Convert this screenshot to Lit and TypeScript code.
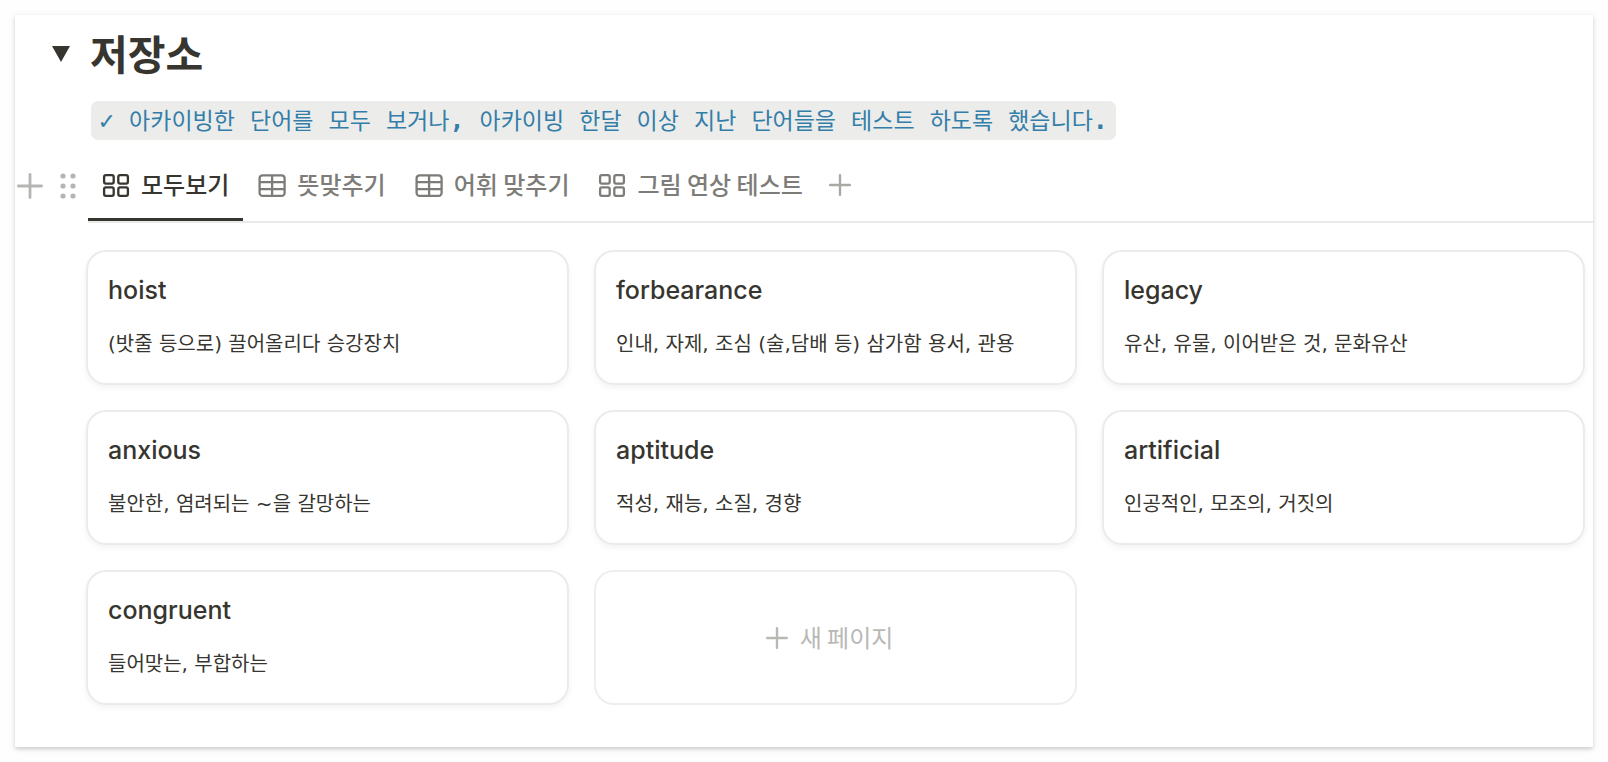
import { LitElement, html, css, svg } from "lit";
import { customElement, property, state } from "lit/decorators.js";
import { classMap } from "lit/directives/class-map.js";

type ViewKind = "gallery" | "table";

interface View {
  name: string;
  kind: ViewKind;
}

interface Word {
  term: string;
  meaning: string;
}

const VIEWS: View[] = [
  { name: "모두보기", kind: "gallery" },
  { name: "뜻맞추기", kind: "table" },
  { name: "어휘 맞추기", kind: "table" },
  { name: "그림 연상 테스트", kind: "gallery" },
];

const WORDS: Word[] = [
  { term: "hoist", meaning: "(밧줄 등으로) 끌어올리다 승강장치" },
  { term: "forbearance", meaning: "인내, 자제, 조심 (술,담배 등) 삼가함 용서, 관용" },
  { term: "legacy", meaning: "유산, 유물, 이어받은 것, 문화유산" },
  { term: "anxious", meaning: "불안한, 염려되는 ~을 갈망하는" },
  { term: "aptitude", meaning: "적성, 재능, 소질, 경향" },
  { term: "artificial", meaning: "인공적인, 모조의, 거짓의" },
  { term: "congruent", meaning: "들어맞는, 부합하는" },
];

const NOTE = "✓ 아카이빙한 단어를 모두 보거나, 아카이빙 한달 이상 지난 단어들을 테스트 하도록 했습니다.";

const galleryIcon = svg`
  <rect x="2.1" y="4.1" width="9.6" height="8.5" rx="1.8"></rect>
  <rect x="16.3" y="4.1" width="9.6" height="8.5" rx="1.8"></rect>
  <rect x="2.1" y="16.4" width="9.6" height="8.5" rx="1.8"></rect>
  <rect x="16.3" y="16.4" width="9.6" height="8.5" rx="1.8"></rect>`;

const tableIcon = svg`
  <rect x="1.6" y="4.3" width="25" height="20.6" rx="3"></rect>
  <path d="M1.6 11.2H26.6M1.6 18.1H26.6M14.1 4.3V24.9"></path>`;

@customElement("view-icon")
class ViewIcon extends LitElement {
  @property() kind: ViewKind = "gallery";

  static styles = css`
    :host { display: block; width: 28px; height: 28px; }
    .icon { display: block; fill: none; stroke: currentColor; stroke-width: 2.3; }
  `;

  render() {
    return html`<svg class="icon" width="28" height="28" viewBox="0 0 28 28" aria-hidden="true">
      ${this.kind === "table" ? tableIcon : galleryIcon}
    </svg>`;
  }
}

@customElement("word-card")
class WordCard extends LitElement {
  @property() term = "";
  @property() meaning = "";

  static styles = css`
    :host { display: block; }
    .card {
      display: flex;
      flex-direction: column;
      gap: 24px;
      padding: 24px 22px 27px;
      border-radius: 20px;
      background: #fff;
      color: #37352f;
      text-decoration: none;
      box-shadow: inset 0 0 0 2px #ebebea, 0 3px 6px rgba(15, 15, 15, 0.05);
    }
    .term { margin: 0; font-size: 25px; line-height: 32px; font-weight: 500; }
    .meaning {
      margin: 0;
      font-family: "DejaVu Sans", "Noto Sans CJK KR", sans-serif;
      font-size: 20px;
      line-height: 28px;
    }
  `;

  render() {
    return html`<a class="card" href="#${this.term}">
      <h3 class="term">${this.term}</h3>
      <p class="meaning">${this.meaning}</p>
    </a>`;
  }
}

@customElement("app-root")
class AppRoot extends LitElement {
  @state() private open = true;
  @state() private active = 0;

  static styles = css`
    :host {
      display: block;
      box-sizing: border-box;
      padding: 15px;
      background: #fefefe;
      color: #37352f;
      font-family: Inter, "Noto Sans CJK KR", sans-serif;
    }
    .panel {
      padding: 15px 0 42px;
      background: #fff;
      box-shadow: 0 2px 4px rgba(0, 0, 0, 0.16), 0 2px 10px rgba(0, 0, 0, 0.06);
    }
    button {
      display: flex;
      align-items: center;
      margin: 0;
      padding: 0;
      border: 0;
      background: none;
      color: inherit;
      font: inherit;
      cursor: pointer;
    }
    svg { display: block; }
    .heading { display: flex; align-items: flex-start; }
    .toggle { justify-content: center; width: 60px; padding-left: 32px; box-sizing: border-box; height: 48px; }
    .toggle.closed svg { transform: rotate(-90deg); }
    .title {
      margin: 0;
      padding-left: 15px;
      font-family: "Noto Sans CJK KR", sans-serif;
      font-size: 41px;
      line-height: 44px;
      font-weight: 700;
    }
    .note { margin: 23px 0 0 76px; display: flex; }
    .code {
      padding: 0 8px;
      border-radius: 7px;
      background: #ececea;
      color: #337ea9;
      font-family: "DejaVu Sans Mono", "Noto Sans CJK KR", monospace;
      font-size: 25px;
      font-weight: 700;
      line-height: 39px;
    }
    .hangul { font-size: 23px; font-weight: 400; line-height: 1; }
    .bar { display: flex; margin-top: 9px; }
    .gutter { display: flex; align-items: center; gap: 17px; width: 73px; box-sizing: border-box; padding-left: 2px; color: #b6b5b2; }
    .views { flex: 1; display: flex; align-items: center; gap: 2px; border-bottom: 2px solid #e9e9e7; }
    .tabs { display: flex; gap: 1px; }
    .tab {
      gap: 11px;
      height: 72px;
      box-sizing: border-box;
      padding: 0 14px;
      border-top: 3px solid transparent;
      border-bottom: 3px solid transparent;
      color: #7d7c78;
      font-family: "Noto Sans CJK KR", sans-serif;
      font-size: 24px;
      font-weight: 500;
      white-space: nowrap;
    }
    .label { padding-bottom: 3px; }
    .tab.active { color: #37352f; border-bottom-color: #37352f; }
    .add { padding: 0 10px; color: #a9a8a5; }
    .gallery {
      display: grid;
      grid-template-columns: repeat(3, minmax(0, 1fr));
      gap: 25px;
      padding: 27px 8px 0 71px;
    }
    .new {
      justify-content: center;
      gap: 12px;
      min-height: 135px;
      padding-right: 12px;
      border-radius: 20px;
      box-shadow: inset 0 0 0 2px #eeeeed;
      color: #b9b8b5;
      font-family: "Noto Sans CJK KR", sans-serif;
      font-size: 24px;
    }
  `;

  private plus(size: number) {
    return html`<svg width=${size} height=${size} viewBox="0 0 24 24" aria-hidden="true"
      fill="none" stroke="currentColor" stroke-width="2.6" stroke-linecap="round">
      <path d="M12 1.3V22.7M1.3 12H22.7"></path>
    </svg>`;
  }

  private renderNote() {
    const parts = NOTE.split(/([가-힣]+)/);
    return parts.map((p, i) => (i % 2 ? html`<span class="hangul">${p}</span>` : p));
  }

  private renderBody() {
    return html`
      <div class="note"><code class="code">${this.renderNote()}</code></div>
      <div class="bar">
        <div class="gutter">
          <button aria-label="추가">${this.plus(26)}</button>
          <button aria-label="이동">
            <svg width="16" height="26" viewBox="0 0 16 26" fill="currentColor" aria-hidden="true">
              ${[3, 13].map((x) => [3, 13, 23].map((y) => svg`<circle cx=${x} cy=${y} r="2.6"></circle>`))}
            </svg>
          </button>
        </div>
        <div class="views">
          <div class="tabs" role="tablist">
            ${VIEWS.map(
              (v, i) => html`<button
                role="tab"
                aria-selected=${i === this.active ? "true" : "false"}
                class=${classMap({ tab: true, active: i === this.active })}
                @click=${() => (this.active = i)}
              ><view-icon kind=${v.kind}></view-icon><span class="label">${v.name}</span></button>`
            )}
          </div>
          <button class="add" aria-label="보기 추가">${this.plus(22)}</button>
        </div>
      </div>
      <div class="gallery">
        ${WORDS.map((w) => html`<word-card term=${w.term} meaning=${w.meaning}></word-card>`)}
        <button class="new">${this.plus(22)}<span class="label">새 페이지</span></button>
      </div>
    `;
  }

  render() {
    return html`<main class="panel">
      <div class="heading">
        <button
          class=${classMap({ toggle: true, closed: !this.open })}
          aria-label="저장소 펼치기"
          aria-expanded=${this.open ? "true" : "false"}
          @click=${() => (this.open = !this.open)}
        >
          <svg width="18" height="16" viewBox="0 0 18 16" fill="currentColor" aria-hidden="true">
            <path d="M0 0H18L9 16Z"></path>
          </svg>
        </button>
        <h2 class="title">저장소</h2>
      </div>
      ${this.open ? this.renderBody() : null}
    </main>`;
  }
}
